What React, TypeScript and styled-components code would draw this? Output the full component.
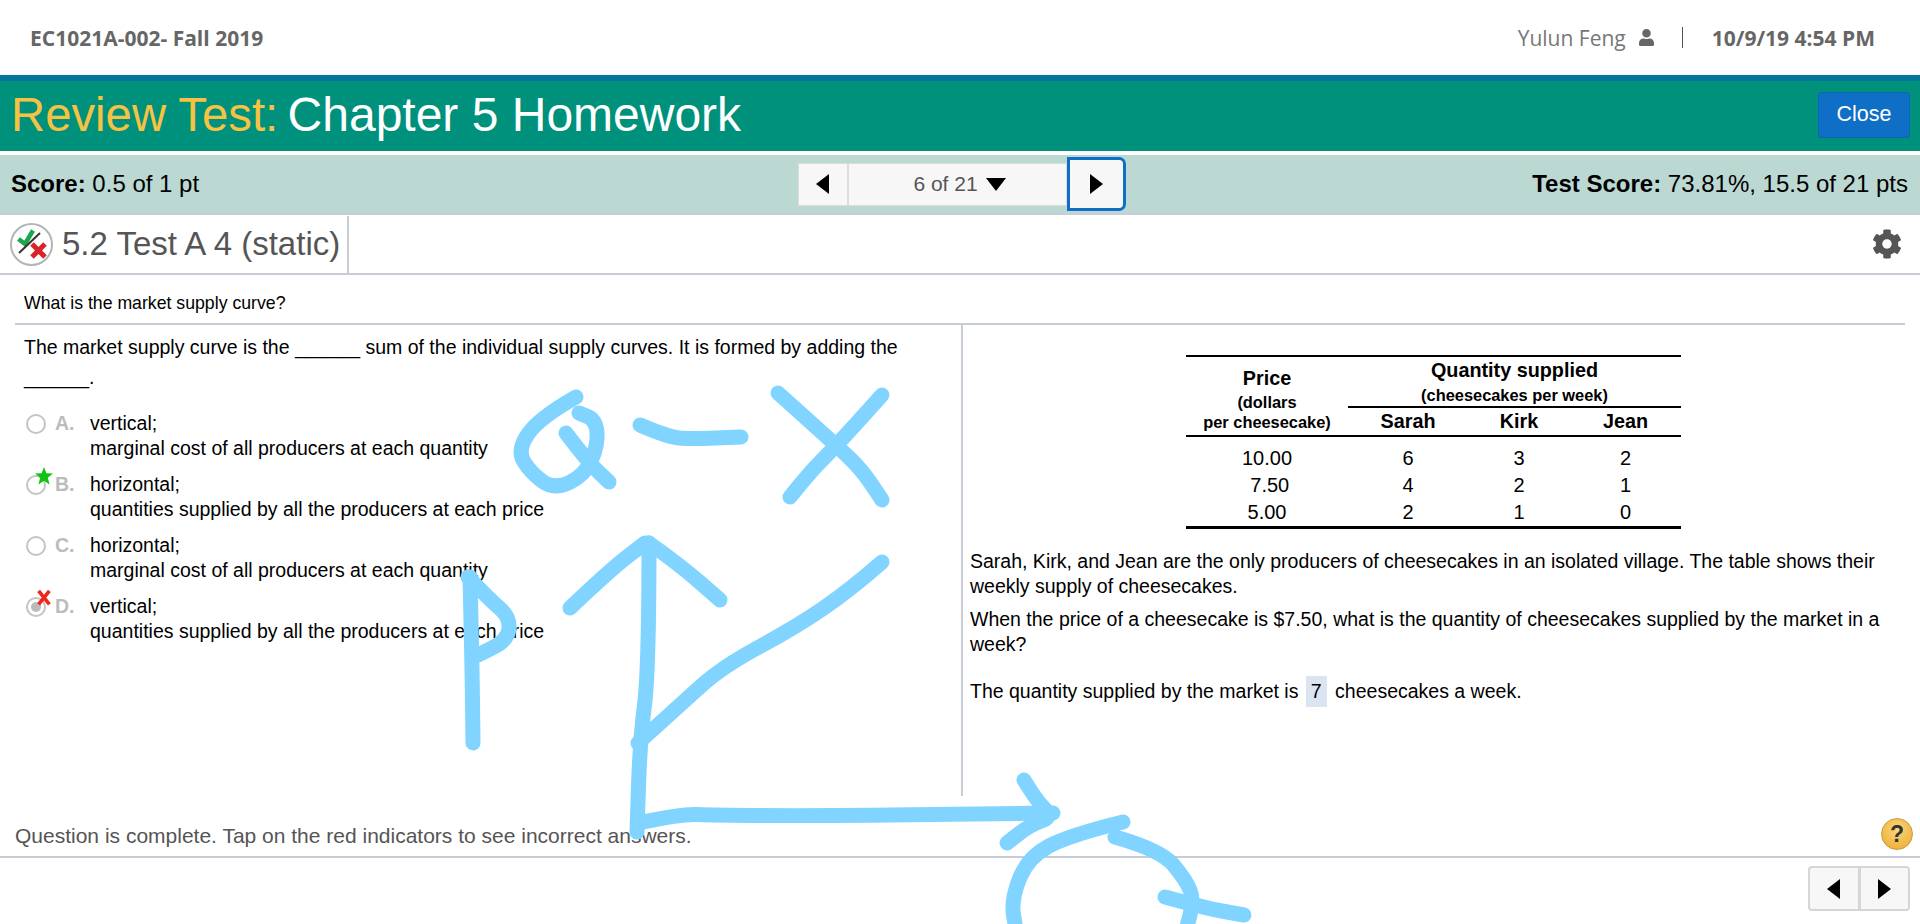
import React from "react"
import styled, { createGlobalStyle } from "styled-components"
import { FaUser, FaCog } from "react-icons/fa"

const GlobalStyle = createGlobalStyle`
  html, body {
    margin: 0;
    padding: 0;
    background: #ffffff;
    overflow: hidden;
  }
  * { box-sizing: border-box; }
`

const Page = styled.div`
  position: relative;
  width: 1920px;
  height: 924px;
  overflow: hidden;
  display: flex;
  flex-direction: column;
  font-family: "Liberation Sans", Arial, sans-serif;
  color: #000;
`

const TopBar = styled.header`
  height: 75px;
  flex: none;
  display: flex;
  align-items: center;
  justify-content: space-between;
  padding: 0 45px 0 30px;
  font-family: "Open Sans", sans-serif;
  font-size: 21px;
  color: #666;
`

const Course = styled.div`
  font-weight: 700;
`

const UserArea = styled.div`
  display: flex;
  align-items: center;
`

const UserName = styled.span`
  color: #777;
`

const UserIcon = styled(FaUser)`
  margin-left: 13px;
  width: 15px;
  height: 19px;
  color: #666;
`

const Sep = styled.span`
  width: 1px;
  height: 21px;
  background: #5a5048;
  margin: 0 29px 0 28px;
`

const DateText = styled.span`
  font-weight: 700;
`

const TitleBar = styled.div`
  height: 76px;
  flex: none;
  background: #00917c;
  border-top: 6px solid #04759a;
  display: flex;
  align-items: center;
  justify-content: space-between;
  padding: 0 10px 3px 11px;
`

const Title = styled.h1`
  margin: 0;
  font-size: 48px;
  font-weight: 400;
  color: #fff;
`

const TitleLead = styled.span`
  color: #f5c242;
  font-size: 47.3px;
  margin-right: -4px;
`

const CloseButton = styled.button`
  width: 92px;
  height: 46px;
  background: #0f6fc6;
  border: 1px solid #0d64b4;
  border-radius: 3px;
  color: #fff;
  font-family: "Liberation Sans", Arial, sans-serif;
  font-size: 21.5px;
`

const ScoreBar = styled.div`
  margin-top: 4px;
  height: 60px;
  flex: none;
  background: #bbd8d3;
  border-bottom: 2px solid #c8ccd4;
  display: grid;
  grid-template-columns: 1fr auto 1fr;
  align-items: center;
  padding: 0 12px 0 11px;
  font-size: 24px;
`

const RightAligned = styled.div`
  text-align: right;
`

const Pager = styled.div`
  display: flex;
  align-items: center;
  margin-left: 4px;
`

const PagerCell = styled.div<{ $w: number; $shift?: number }>`
  width: ${(p) => p.$w}px;
  height: 43px;
  padding-left: ${(p) => p.$shift ?? 0}px;
  background: #f7f7f7;
  border: 1px solid #dcdcdc;
  display: flex;
  align-items: center;
  justify-content: center;
  gap: 8px;
  font-size: 21px;
  color: #555;
`

const FocusCell = styled.div`
  width: 59px;
  height: 54px;
  background: #f7f7f7;
  border: 3px solid #0f6fc6;
  border-radius: 0 7px 7px 0;
  display: flex;
  align-items: center;
  justify-content: center;
`

const Tri = styled.span<{ $dir: "left" | "right" | "down" }>`
  width: 0;
  height: 0;
  ${(p) =>
    p.$dir === "left"
      ? "border-top: 10px solid transparent; border-bottom: 10px solid transparent; border-right: 13px solid #000;"
      : p.$dir === "right"
      ? "border-top: 10px solid transparent; border-bottom: 10px solid transparent; border-left: 13px solid #000;"
      : "border-left: 10px solid transparent; border-right: 10px solid transparent; border-top: 13px solid #000;"}
`

const QuestionHead = styled.div`
  height: 60px;
  flex: none;
  border-bottom: 2px solid #c8ccd4;
  display: flex;
  align-items: center;
  justify-content: space-between;
  padding-right: 18px;
`

const QuestionName = styled.div`
  display: flex;
  align-items: center;
  gap: 8px;
  height: 57px;
  padding: 0 7px 0 9px;
  border-right: 2px solid #c8ccd4;
  font-size: 33px;
  color: #555;
`

const Gear = styled(FaCog)`
  width: 30px;
  height: 30px;
  color: #555;
`

const Prompt = styled.div`
  margin: 0 15px 0 15px;
  height: 50px;
  flex: none;
  padding: 16px 0 0 9px;
  border-bottom: 2px solid #c8ccd4;
  font-size: 17.7px;
  line-height: 24px;
`

const Columns = styled.div`
  display: grid;
  grid-template-columns: 963px 1fr;
  height: 471px;
  flex: none;
`

const LeftCol = styled.div`
  padding: 7px 52px 0 24px;
  border-right: 2px solid #c8ccd4;
  font-size: 19.5px;
  line-height: 30px;
`

const Stem = styled.p`
  margin: 0 0 19px;
`

const Option = styled.div`
  display: grid;
  grid-template-columns: 31px 35px 1fr;
  line-height: 25px;
  margin-bottom: 11px;
  position: relative;
`

const Radio = styled.span<{ $on?: boolean }>`
  width: 20px;
  height: 20px;
  margin: 3px 0 0 2px;
  border: 2px solid #c4c4c4;
  border-radius: 50%;
  display: flex;
  align-items: center;
  justify-content: center;
  &::after {
    content: "";
    width: 10px;
    height: 10px;
    border-radius: 50%;
    background: ${(p) => (p.$on ? "#bbb" : "transparent")};
  }
`

const Letter = styled.span`
  font-weight: 700;
  color: #bcbcbc;
`

const Mark = styled.svg`
  position: absolute;
  left: 11px;
  top: -5px;
  width: 18px;
  height: 18px;
`

const RightCol = styled.div`
  padding: 30px 25px 0 7px;
  font-size: 19.5px;
  line-height: 24.5px;
`

const SupplyTable = styled.table`
  margin-left: 216px;
  width: 495px;
  table-layout: fixed;
  border-collapse: collapse;
  border-top: 2px solid #000;
  border-bottom: 3px solid #000;
  text-align: center;
  margin-bottom: 20px;
`

const Col = styled.col<{ $w: number }>`
  width: ${(p) => p.$w}px;
`

const HeadCell = styled.th<{ $rule?: boolean }>`
  padding: 0;
  vertical-align: bottom;
  font-size: 19.8px;
  line-height: 27px;
  ${(p) => (p.$rule ? "border-bottom: 2px solid #000;" : "")}
`

const PriceHead = styled(HeadCell)`
  border-bottom: 2px solid #000;
  padding-bottom: 3px;
`

const Small = styled.span<{ $tight?: boolean }>`
  display: block;
  font-size: 16.4px;
  line-height: ${(p) => (p.$tight ? 20 : 22)}px;
`

const Cell = styled.td`
  padding: 0;
  height: 27px;
  line-height: 27px;
  font-size: 20px;
`

const SpacerRow = styled.tr`
  height: 9px;
`

const Para = styled.p<{ $gap?: number }>`
  margin: 0 0 ${(p) => p.$gap ?? 9}px;
`

const AnswerBox = styled.span`
  display: inline-block;
  background: #dbe5f1;
  padding: 0 5px;
  margin: 0 3px 0 2px;
  line-height: 31px;
`

const Status = styled.div`
  height: 62px;
  flex: none;
  border-bottom: 2px solid #c8ccd4;
  display: flex;
  align-items: flex-end;
  justify-content: space-between;
  padding: 0 7px 7px 15px;
  font-size: 21px;
  line-height: 26px;
  color: #555;
`

const Help = styled.div`
  width: 32px;
  height: 32px;
  border-radius: 50%;
  margin-bottom: -1px;
  background: radial-gradient(circle at 50% 35%, #fbd67a, #eaa92e);
  border: 1px solid #c99a3c;
  display: flex;
  align-items: center;
  justify-content: center;
  font-weight: 700;
  font-size: 23px;
  color: #333;
`

const BottomBar = styled.div`
  display: flex;
  justify-content: flex-end;
  padding: 8px 10px 0 0;
`

const BottomPager = styled.div`
  display: flex;
  width: 102px;
  height: 45px;
  border: 2px solid #d6d6d6;
  border-radius: 4px;
  background: #f7f7f7;
`

const BottomCell = styled.div<{ $split?: boolean }>`
  flex: 1;
  display: flex;
  align-items: center;
  justify-content: center;
  ${(p) => (p.$split ? "border-right: 3px solid #d6d6d6;" : "")}
`

const Ink = styled.svg`
  position: absolute;
  left: 0;
  top: 0;
  width: 1920px;
  height: 924px;
  pointer-events: none;
  fill: none;
  stroke: #80d4ff;
  stroke-width: 15;
  stroke-linecap: round;
  stroke-linejoin: round;
`

const options = [
  { letter: "A.", a: "vertical;", b: "marginal cost of all producers at each quantity" },
  { letter: "B.", a: "horizontal;", b: "quantities supplied by all the producers at each price", mark: "star" },
  { letter: "C.", a: "horizontal;", b: "marginal cost of all producers at each quantity" },
  { letter: "D.", a: "vertical;", b: "quantities supplied by all the producers at each price", mark: "cross", on: true },
]

const rows = [
  ["10.00", "6", "3", "2"],
  ["\u00a07.50", "4", "2", "1"],
  ["5.00", "2", "1", "0"],
]

// pen strokes, as the points the hand went through
const strokes: number[][][] = [
  [[576, 397], [539, 418], [517, 450], [530, 472], [554, 490], [585, 475], [598, 445], [596, 420], [579, 413]],
  [[566, 433], [588, 462], [609, 482]],
  [[640, 425], [668, 437], [690, 439], [741, 437]],
  [[778, 393], [836, 445], [862, 470], [882, 500]],
  [[882, 395], [839, 443], [812, 470], [790, 497]],
  [[570, 608], [610, 570], [645, 543]],
  [[649, 543], [680, 565], [720, 600]],
  [[649, 543], [649, 670], [640, 740], [637, 832]],
  [[638, 823], [680, 814], [713, 815], [813, 816], [1053, 813]],
  [[1024, 780], [1036, 800], [1053, 817], [1030, 825], [1007, 843]],
  [[882, 562], [850, 590], [796, 627], [722, 667], [680, 705], [638, 743]],
  [[470, 577], [472, 660], [473, 743]],
  [[468, 577], [490, 600], [510, 617], [508, 640], [478, 655]],
  [[1123, 822], [1070, 835], [1028, 857], [1011, 900], [1016, 930]],
  [[1115, 837], [1161, 850], [1186, 880], [1194, 900], [1186, 930]],
  [[1165, 897], [1205, 908], [1244, 915]],
]

const smooth = (pts: number[][]) => {
  let d = `M${pts[0][0]} ${pts[0][1]}`
  for (let i = 1; i < pts.length - 1; i++) {
    const mx = (pts[i][0] + pts[i + 1][0]) / 2
    const my = (pts[i][1] + pts[i + 1][1]) / 2
    d += ` Q${pts[i][0]} ${pts[i][1]} ${mx} ${my}`
  }
  const last = pts[pts.length - 1]
  return d + ` L${last[0]} ${last[1]}`
}

export default function App() {
  return (
    <Page>
      <GlobalStyle />
      <TopBar>
        <Course>EC1021A-002- Fall 2019</Course>
        <UserArea>
          <UserName>Yulun Feng</UserName>
          <UserIcon />
          <Sep />
          <DateText>10/9/19 4:54 PM</DateText>
        </UserArea>
      </TopBar>
      <TitleBar>
        <Title>
          <TitleLead>Review Test:</TitleLead> Chapter 5 Homework
        </Title>
        <CloseButton>Close</CloseButton>
      </TitleBar>
      <ScoreBar>
        <div>
          <b>Score:</b> 0.5 of 1 pt
        </div>
        <Pager>
          <PagerCell $w={50}>
            <Tri $dir="left" />
          </PagerCell>
          <PagerCell $w={219} $shift={5}>
            6 of 21 <Tri $dir="down" />
          </PagerCell>
          <FocusCell>
            <Tri $dir="right" />
          </FocusCell>
        </Pager>
        <RightAligned>
          <b>Test Score:</b> 73.81%, 15.5 of 21 pts
        </RightAligned>
      </ScoreBar>
      <QuestionHead>
        <QuestionName>
          <svg width="45" height="45" viewBox="0 0 45 45">
            <circle cx="22.5" cy="22.5" r="20.5" fill="#fff" stroke="#b5b5b5" strokeWidth="2" />
            <path d="M9.5 17 L16 22 L24 8.5" fill="none" stroke="#1aa64a" strokeWidth="4.5" />
            <path d="M10 31 L31 11" fill="none" stroke="#333" strokeWidth="2" />
            <path d="M23 22 L36 35 M36 22 L23 35" fill="none" stroke="#d9222a" strokeWidth="5" />
          </svg>
          5.2 Test A 4 (static)
        </QuestionName>
        <Gear />
      </QuestionHead>
      <Prompt>What is the market supply curve?</Prompt>
      <Columns>
        <LeftCol>
          <Stem>
            The market supply curve is the ______ sum of the individual supply curves. It is formed by adding the ______.
          </Stem>
          {options.map((o) => (
            <Option key={o.letter}>
              <Radio $on={o.on} />
              <Letter>{o.letter}</Letter>
              <div>
                {o.a}
                <br />
                {o.b}
              </div>
              {o.mark === "star" && (
                <Mark viewBox="0 0 20 20">
                  <path d="M10 0 L12.6 7 L20 7.3 L14.2 12 L16.2 19.5 L10 15.3 L3.8 19.5 L5.8 12 L0 7.3 L7.4 7 Z" fill="#0ec40e" />
                </Mark>
              )}
              {o.mark === "cross" && (
                <Mark viewBox="0 0 20 20">
                  <path d="M4 2 L16 17 M16 2 L4 17" fill="none" stroke="#f0261c" strokeWidth="4" />
                </Mark>
              )}
            </Option>
          ))}
        </LeftCol>
        <RightCol>
          <SupplyTable>
            <colgroup>
              <Col $w={162} />
              <Col $w={120} />
              <Col $w={102} />
              <Col $w={111} />
            </colgroup>
            <thead>
              <tr>
                <PriceHead rowSpan={2}>
                  Price
                  <Small $tight>(dollars</Small>
                  <Small $tight>per cheesecake)</Small>
                </PriceHead>
                <HeadCell colSpan={3} $rule>
                  Quantity supplied
                  <Small>(cheesecakes per week)</Small>
                </HeadCell>
              </tr>
              <tr>
                <HeadCell $rule>Sarah</HeadCell>
                <HeadCell $rule>Kirk</HeadCell>
                <HeadCell $rule>Jean</HeadCell>
              </tr>
            </thead>
            <tbody>
              <SpacerRow />
              {rows.map((r) => (
                <tr key={r[0]}>
                  {r.map((v, i) => (
                    <Cell key={i}>{v}</Cell>
                  ))}
                </tr>
              ))}
            </tbody>
          </SupplyTable>
          <Para>
            Sarah, Kirk, and Jean are the only producers of cheesecakes in an isolated village. The table shows their weekly supply of cheesecakes.
          </Para>
          <Para $gap={20}>
            When the price of a cheesecake is $7.50, what is the quantity of cheesecakes supplied by the market in a week?
          </Para>
          <Para>
            The quantity supplied by the market is <AnswerBox>7</AnswerBox> cheesecakes a week.
          </Para>
        </RightCol>
      </Columns>
      <Status>
        <span>Question is complete. Tap on the red indicators to see incorrect answers.</span>
        <Help>?</Help>
      </Status>
      <BottomBar>
        <BottomPager>
          <BottomCell $split>
            <Tri $dir="left" />
          </BottomCell>
          <BottomCell>
            <Tri $dir="right" />
          </BottomCell>
        </BottomPager>
      </BottomBar>
      <Ink viewBox="0 0 1920 924">
        {strokes.map((pts, i) => (
          <path key={i} d={smooth(pts)} />
        ))}
      </Ink>
    </Page>
  )
}
